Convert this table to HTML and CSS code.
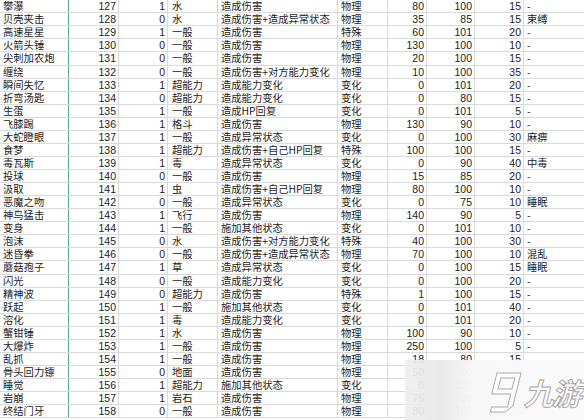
FILE: index.html
```html
<!DOCTYPE html>
<html lang="zh">
<head>
<meta charset="utf-8">
<link rel="stylesheet" href="styles.css">
</head>
<body>
<div class="sheet">
<div class="r"><span class="t">攀瀑</span><span class="n">127</span><span class="n">1</span><span class="t">水</span><span class="t">造成伤害</span><span class="t">物理</span><span class="n">80</span><span class="n">100</span><span class="n">15</span><span class="t">-</span></div>
<div class="r"><span class="t">贝壳夹击</span><span class="n">128</span><span class="n">0</span><span class="t">水</span><span class="t">造成伤害+造成异常状态</span><span class="t">物理</span><span class="n">35</span><span class="n">85</span><span class="n">15</span><span class="t">束缚</span></div>
<div class="r"><span class="t">高速星星</span><span class="n">129</span><span class="n">1</span><span class="t">一般</span><span class="t">造成伤害</span><span class="t">特殊</span><span class="n">60</span><span class="n">101</span><span class="n">20</span><span class="t">-</span></div>
<div class="r"><span class="t">火箭头锤</span><span class="n">130</span><span class="n">0</span><span class="t">一般</span><span class="t">造成伤害</span><span class="t">物理</span><span class="n">130</span><span class="n">100</span><span class="n">10</span><span class="t">-</span></div>
<div class="r"><span class="t">尖刺加农炮</span><span class="n">131</span><span class="n">0</span><span class="t">一般</span><span class="t">造成伤害</span><span class="t">物理</span><span class="n">20</span><span class="n">100</span><span class="n">15</span><span class="t">-</span></div>
<div class="r"><span class="t">缠绕</span><span class="n">132</span><span class="n">0</span><span class="t">一般</span><span class="t">造成伤害+对方能力变化</span><span class="t">物理</span><span class="n">10</span><span class="n">100</span><span class="n">35</span><span class="t">-</span></div>
<div class="r"><span class="t">瞬间失忆</span><span class="n">133</span><span class="n">1</span><span class="t">超能力</span><span class="t">造成能力变化</span><span class="t">变化</span><span class="n">0</span><span class="n">101</span><span class="n">20</span><span class="t">-</span></div>
<div class="r"><span class="t">折弯汤匙</span><span class="n">134</span><span class="n">0</span><span class="t">超能力</span><span class="t">造成能力变化</span><span class="t">变化</span><span class="n">0</span><span class="n">80</span><span class="n">15</span><span class="t">-</span></div>
<div class="r"><span class="t">生蛋</span><span class="n">135</span><span class="n">1</span><span class="t">一般</span><span class="t">造成HP回复</span><span class="t">变化</span><span class="n">0</span><span class="n">101</span><span class="n">5</span><span class="t">-</span></div>
<div class="r"><span class="t">飞膝踢</span><span class="n">136</span><span class="n">1</span><span class="t">格斗</span><span class="t">造成伤害</span><span class="t">物理</span><span class="n">130</span><span class="n">90</span><span class="n">10</span><span class="t">-</span></div>
<div class="r"><span class="t">大蛇瞪眼</span><span class="n">137</span><span class="n">1</span><span class="t">一般</span><span class="t">造成异常状态</span><span class="t">变化</span><span class="n">0</span><span class="n">100</span><span class="n">30</span><span class="t">麻痹</span></div>
<div class="r"><span class="t">食梦</span><span class="n">138</span><span class="n">1</span><span class="t">超能力</span><span class="t">造成伤害+自己HP回复</span><span class="t">特殊</span><span class="n">100</span><span class="n">100</span><span class="n">15</span><span class="t">-</span></div>
<div class="r"><span class="t">毒瓦斯</span><span class="n">139</span><span class="n">1</span><span class="t">毒</span><span class="t">造成异常状态</span><span class="t">变化</span><span class="n">0</span><span class="n">90</span><span class="n">40</span><span class="t">中毒</span></div>
<div class="r"><span class="t">投球</span><span class="n">140</span><span class="n">0</span><span class="t">一般</span><span class="t">造成伤害</span><span class="t">物理</span><span class="n">15</span><span class="n">85</span><span class="n">20</span><span class="t">-</span></div>
<div class="r"><span class="t">汲取</span><span class="n">141</span><span class="n">1</span><span class="t">虫</span><span class="t">造成伤害+自己HP回复</span><span class="t">物理</span><span class="n">80</span><span class="n">100</span><span class="n">10</span><span class="t">-</span></div>
<div class="r"><span class="t">恶魔之吻</span><span class="n">142</span><span class="n">0</span><span class="t">一般</span><span class="t">造成异常状态</span><span class="t">变化</span><span class="n">0</span><span class="n">75</span><span class="n">10</span><span class="t">睡眠</span></div>
<div class="r"><span class="t">神鸟猛击</span><span class="n">143</span><span class="n">1</span><span class="t">飞行</span><span class="t">造成伤害</span><span class="t">物理</span><span class="n">140</span><span class="n">90</span><span class="n">5</span><span class="t">-</span></div>
<div class="r"><span class="t">变身</span><span class="n">144</span><span class="n">1</span><span class="t">一般</span><span class="t">施加其他状态</span><span class="t">变化</span><span class="n">0</span><span class="n">101</span><span class="n">10</span><span class="t">-</span></div>
<div class="r"><span class="t">泡沫</span><span class="n">145</span><span class="n">0</span><span class="t">水</span><span class="t">造成伤害+对方能力变化</span><span class="t">特殊</span><span class="n">40</span><span class="n">100</span><span class="n">30</span><span class="t">-</span></div>
<div class="r"><span class="t">迷昏拳</span><span class="n">146</span><span class="n">0</span><span class="t">一般</span><span class="t">造成伤害+造成异常状态</span><span class="t">物理</span><span class="n">70</span><span class="n">100</span><span class="n">10</span><span class="t">混乱</span></div>
<div class="r"><span class="t">蘑菇孢子</span><span class="n">147</span><span class="n">1</span><span class="t">草</span><span class="t">造成异常状态</span><span class="t">变化</span><span class="n">0</span><span class="n">100</span><span class="n">15</span><span class="t">睡眠</span></div>
<div class="r"><span class="t">闪光</span><span class="n">148</span><span class="n">0</span><span class="t">一般</span><span class="t">造成能力变化</span><span class="t">变化</span><span class="n">0</span><span class="n">100</span><span class="n">20</span><span class="t">-</span></div>
<div class="r"><span class="t">精神波</span><span class="n">149</span><span class="n">0</span><span class="t">超能力</span><span class="t">造成伤害</span><span class="t">特殊</span><span class="n">1</span><span class="n">100</span><span class="n">15</span><span class="t">-</span></div>
<div class="r"><span class="t">跃起</span><span class="n">150</span><span class="n">1</span><span class="t">一般</span><span class="t">施加其他状态</span><span class="t">变化</span><span class="n">0</span><span class="n">101</span><span class="n">40</span><span class="t">-</span></div>
<div class="r"><span class="t">溶化</span><span class="n">151</span><span class="n">1</span><span class="t">毒</span><span class="t">造成能力变化</span><span class="t">变化</span><span class="n">0</span><span class="n">101</span><span class="n">20</span><span class="t">-</span></div>
<div class="r"><span class="t">蟹钳锤</span><span class="n">152</span><span class="n">1</span><span class="t">水</span><span class="t">造成伤害</span><span class="t">物理</span><span class="n">100</span><span class="n">90</span><span class="n">10</span><span class="t">-</span></div>
<div class="r"><span class="t">大爆炸</span><span class="n">153</span><span class="n">1</span><span class="t">一般</span><span class="t">造成伤害</span><span class="t">物理</span><span class="n">250</span><span class="n">100</span><span class="n">5</span><span class="t">-</span></div>
<div class="r"><span class="t">乱抓</span><span class="n">154</span><span class="n">1</span><span class="t">一般</span><span class="t">造成伤害</span><span class="t">物理</span><span class="n">18</span><span class="n">80</span><span class="n">15</span><span class="t">-</span></div>
<div class="r"><span class="t">骨头回力镖</span><span class="n">155</span><span class="n">0</span><span class="t">地面</span><span class="t">造成伤害</span><span class="t">物理</span><span class="n">50</span><span class="n">90</span><span class="n">10</span><span class="t">-</span></div>
<div class="r"><span class="t">睡觉</span><span class="n">156</span><span class="n">1</span><span class="t">超能力</span><span class="t">施加其他状态</span><span class="t">变化</span><span class="n">0</span><span class="n">101</span><span class="n">10</span><span class="t">-</span></div>
<div class="r"><span class="t">岩崩</span><span class="n">157</span><span class="n">1</span><span class="t">岩石</span><span class="t">造成伤害</span><span class="t">物理</span><span class="n">75</span><span class="n">90</span><span class="n">10</span><span class="t">-</span></div>
<div class="r"><span class="t">终结门牙</span><span class="n">158</span><span class="n">0</span><span class="t">一般</span><span class="t">造成伤害</span><span class="t">物理</span><span class="n">80</span><span class="n">100</span><span class="n">10</span><span class="t">-</span></div>
</div>
<div class="mark">
  <svg class="logo" viewBox="0 0 36 42" width="36" height="42" aria-hidden="true">
    <g transform="translate(8 1) skewX(-14)">
      <path d="M0 0 H24 V33 L18 39 H3 V34 H19 V21 H0 Z M5 5 V16 H19 V5 Z" fill="#fdfdfd" stroke="#a9a9a9" stroke-width="1" fill-rule="evenodd" stroke-linejoin="round"/>
    </g>
  </svg>
  <span class="brand">九游</span>
</div>
</body>
</html>
```
FILE: styles.css
```css
html, body {
  margin: 0;
  padding: 0;
  background: #ffffff;
}
body {
  width: 584px;
  height: 420px;
  overflow: hidden;
  position: relative;
}
.sheet {
  padding-top: 0.2px;
  font-family: "Noto Sans CJK SC", "Liberation Sans", sans-serif;
  color: #1c1c1c;
}
.r {
  display: grid;
  grid-template-columns: 69px 50px 49px 50px 120px 50px 39px 48px 49px 1fr;
  height: 13.07px;
  box-sizing: border-box;
  border-bottom: 1px solid #dadada;
}
.r > span {
  box-sizing: border-box;
  border-right: 1px solid #dadada;
  white-space: nowrap;
  line-height: 12px;
  height: 12.07px;
}
.r > span:first-child {
  border-right: 1px solid #4fa898;
}
.r > span:last-child {
  border-right: none;
}
.t {
  font-size: 10.3px;
  padding-left: 3px;
}
.r > span:nth-child(4) {
  padding-left: 4px;
}
.n {
  font-family: "Liberation Sans", sans-serif;
  font-size: 10.5px;
  text-align: right;
  padding-right: 2px;
  color: #222;
}
.mark {
  position: absolute;
  left: 405px;
  top: 360px;
  width: 179px;
  height: 60px;
  background: linear-gradient(90deg, rgba(238,238,238,0.93) 0%, rgba(232,232,232,0.96) 20%, rgba(248,248,248,0.98) 38%, #fafafa 100%);
  display: flex;
  align-items: center;
  padding-left: 84px;
  box-sizing: border-box;
  gap: 2px;
  overflow: hidden;
}
.logo {
  flex: none;
  margin-top: 6px;
}
.brand {
  font-family: "Noto Sans CJK SC", sans-serif;
  font-size: 30px;
  font-weight: 700;
  color: #fcfcfc;
  -webkit-text-stroke: 1px #a6a6a6;
  transform: skewX(-14deg);
  letter-spacing: -2px;
  white-space: nowrap;
  margin-top: 4px;
}
```
